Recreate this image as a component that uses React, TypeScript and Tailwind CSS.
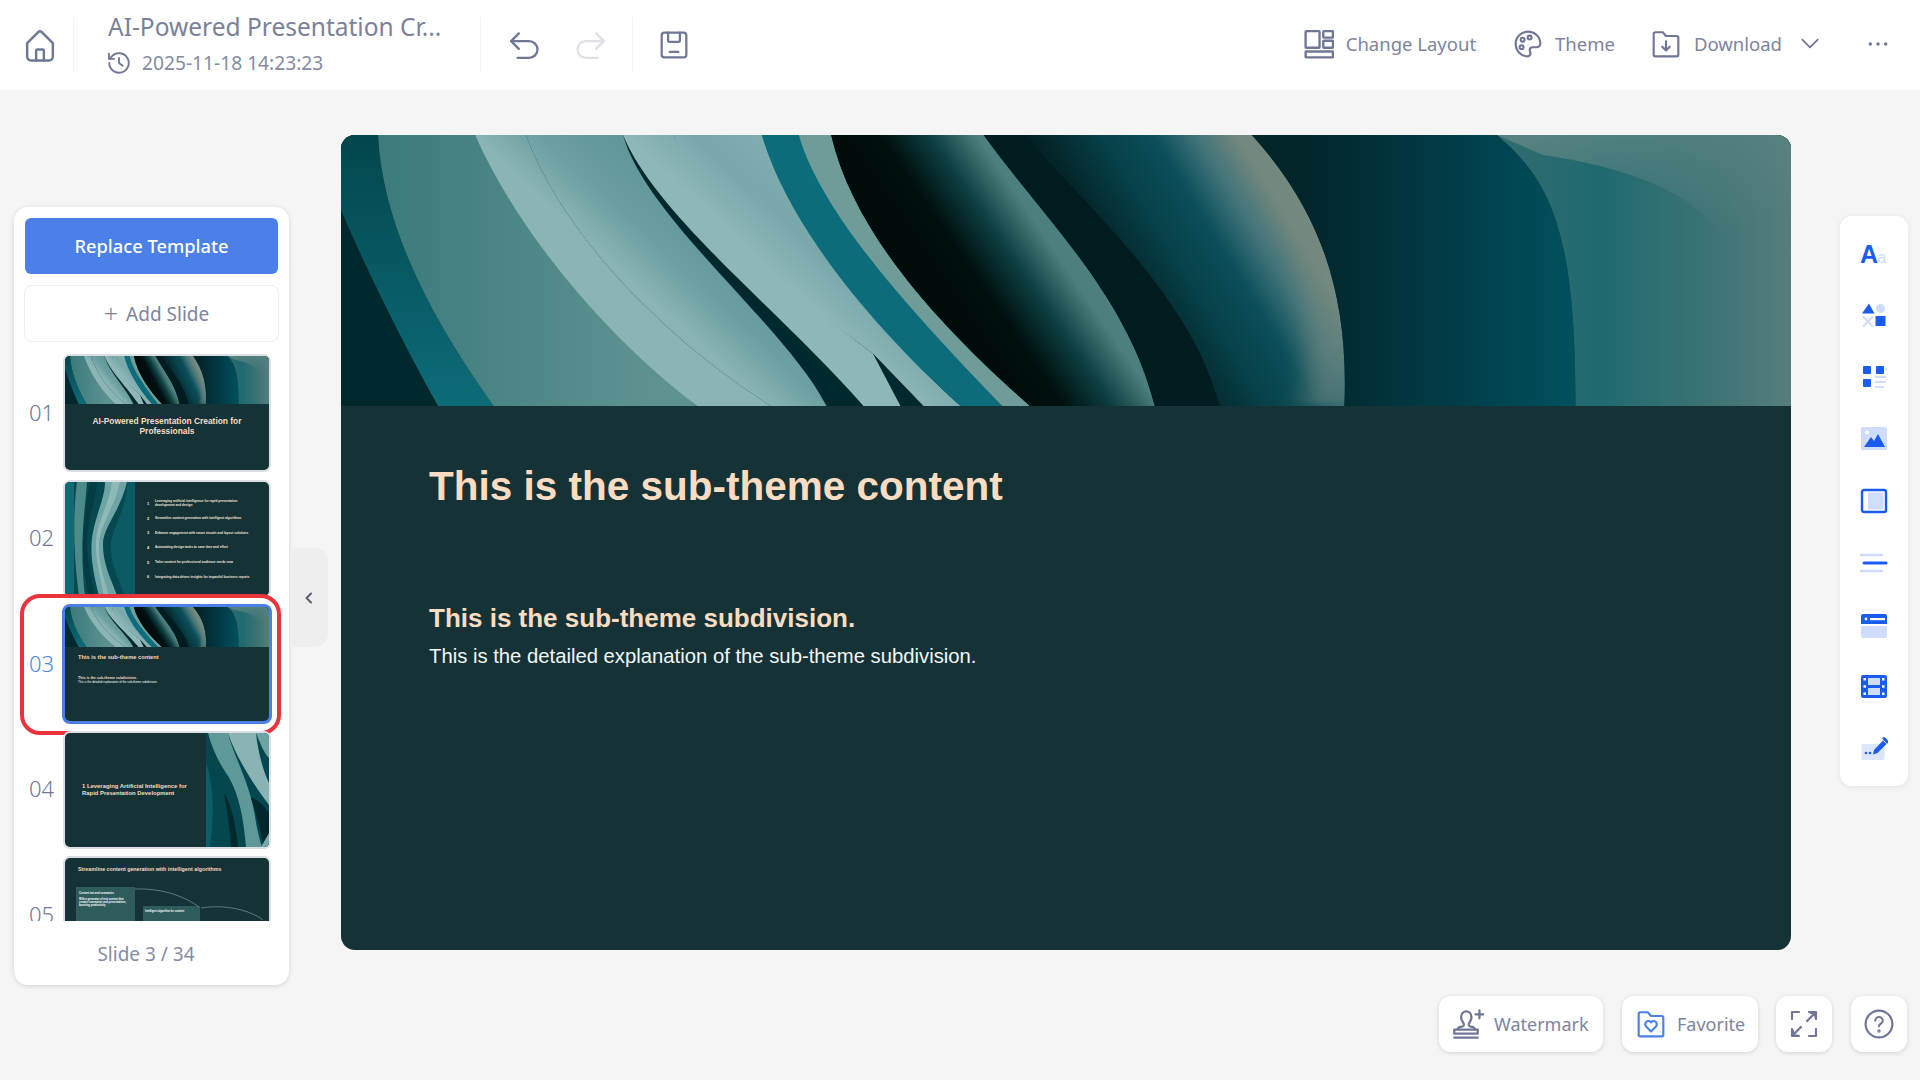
import React from "react";

function Art({ className = "" }: { className?: string }) {
  return (
    <svg viewBox="0 0 1568 813" preserveAspectRatio="none" className={className}>
      <defs>
        <linearGradient id="a-b2" x1="40" y1="0" x2="330" y2="0" gradientUnits="userSpaceOnUse">
          <stop offset="0" stopColor="#3c7a7c" />
          <stop offset="1" stopColor="#5d9291" />
        </linearGradient>
        <linearGradient id="a-s1" x1="0" y1="0" x2="0" y2="813" gradientUnits="userSpaceOnUse">
          <stop offset="0" stopColor="#03464d" />
          <stop offset="1" stopColor="#0c6c78" />
        </linearGradient>
        <linearGradient id="a-g3" x1="145" y1="0" x2="295" y2="-58" gradientUnits="userSpaceOnUse">
          <stop offset="0" stopColor="#8ab4b5" />
          <stop offset="0.4" stopColor="#6b9fa0" />
          <stop offset="1" stopColor="#5f9596" />
        </linearGradient>
        <linearGradient id="a-g5" x1="305" y1="0" x2="455" y2="-58" gradientUnits="userSpaceOnUse">
          <stop offset="0" stopColor="#8fb7b9" />
          <stop offset="0.45" stopColor="#78a8ab" />
          <stop offset="1" stopColor="#82aeb1" />
        </linearGradient>
        <linearGradient id="a-b9" x1="540" y1="0" x2="679" y2="-34" gradientUnits="userSpaceOnUse">
          <stop offset="0" stopColor="#000c0b" />
          <stop offset="0.3" stopColor="#00100f" />
          <stop offset="0.65" stopColor="#0d3f42" />
          <stop offset="1" stopColor="#4d7f7e" />
        </linearGradient>
        <linearGradient id="a-b11" x1="740" y1="0" x2="960" y2="-48" gradientUnits="userSpaceOnUse">
          <stop offset="0" stopColor="#021f22" />
          <stop offset="0.35" stopColor="#074048" />
          <stop offset="0.6" stopColor="#0b4f5a" />
          <stop offset="0.8" stopColor="#43747a" />
          <stop offset="1" stopColor="#74897f" />
        </linearGradient>
        <linearGradient id="a-b12" x1="1040" y1="0" x2="1330" y2="0" gradientUnits="userSpaceOnUse">
          <stop offset="0" stopColor="#02252a" />
          <stop offset="0.5" stopColor="#013a45" />
          <stop offset="1" stopColor="#01505e" />
        </linearGradient>
        <linearGradient id="a-r" x1="1250" y1="0" x2="1568" y2="0" gradientUnits="userSpaceOnUse">
          <stop offset="0" stopColor="#326c70" />
          <stop offset="0.35" stopColor="#1f6a70" />
          <stop offset="0.75" stopColor="#3f7475" />
          <stop offset="1" stopColor="#567d7e" />
        </linearGradient>
        <linearGradient id="a-r2" x1="1300" y1="0" x2="1500" y2="300" gradientUnits="userSpaceOnUse">
          <stop offset="0" stopColor="#5c8583" stopOpacity="0.9" />
          <stop offset="1" stopColor="#5c8583" stopOpacity="0" />
        </linearGradient>
        <filter id="a-bl" x="-20%" y="-5%" width="140%" height="110%">
          <feGaussianBlur stdDeviation="14" />
        </filter>
      </defs>
      <rect width="1568" height="813" fill="#01282d" />
      <path d="M0 0L40 0C45 280 100 560 165 813L105 813C70 640 30 420 0 225Z" fill="url(#a-s1)" />
      <path d="M40 0L145 0C200 300 290 600 385 813L165 813C100 560 45 280 40 0Z" fill="url(#a-b2)" />
      <path d="M145 0L200 0C240 300 350 610 465 813L385 813C280 590 190 280 145 0Z" fill="url(#a-g3)" />
      <path d="M200 0L305 0C330 250 480 570 525 813L465 813C350 610 240 300 200 0Z" fill="url(#a-g3)" />
      <path d="M305 0L360 0C400 260 500 500 575 655L605 813L565 813C480 540 340 240 305 0Z" fill="url(#a-g5)" />
      <path d="M360 0L460 0C490 240 560 540 670 813L630 813L575 655C490 480 390 260 360 0Z" fill="url(#a-g5)" />
      <path d="M455 0L495 0C525 240 620 500 715 813L670 813C560 540 480 240 455 0Z" fill="#0d6c7b" />
      <path d="M495 0L530 0C555 300 650 580 745 813L715 813C620 540 520 240 495 0Z" fill="#6f9b98" />
      <path d="M530 0L695 0C760 250 850 480 880 813L745 813C650 580 555 300 530 0Z" fill="url(#a-b9)" />
      <path d="M695 0L740 0C800 200 920 480 950 813L880 813C850 480 760 250 695 0Z" fill="#011c1e" />
      <path d="M740 0L985 0C1060 230 1090 480 1085 813L950 813C920 480 800 200 740 0Z" fill="url(#a-b11)" />
      <path d="M960 0L985 0C1060 230 1090 480 1085 813L1040 813C1060 500 1040 230 960 0Z" fill="#74897f" opacity="0.55" filter="url(#a-bl)" />
      <path d="M985 0L1250 0C1310 140 1335 300 1335 813L1085 813C1090 480 1060 230 985 0Z" fill="url(#a-b12)" />
      <path d="M1250 0L1568 0L1568 813L1335 813C1335 300 1310 140 1250 0Z" fill="url(#a-r)" />
      <path d="M1250 0L1568 0L1568 400L1500 400C1500 200 1400 100 1300 60Z" fill="url(#a-r2)" />
    </svg>
  );
}

function ArtTall() {
  return (
    <svg viewBox="0 0 70 114" preserveAspectRatio="none" className="w-[70px] h-full shrink-0">
      <rect width="70" height="114" fill="#05484f" />
      <rect width="9" height="114" fill="#0d6b75" />
      <path d="M12 0L22 0C20 30 14 60 20 114L14 114C8 70 8 30 12 0Z" fill="#4d8a8a" />
      <path d="M25 0L32 0C30 20 22 40 22 60C22 85 28 100 30 114L24 114C18 90 14 60 25 0Z" fill="#043c42" />
      <path d="M40 0L62 0C55 30 38 45 38 62C38 85 48 100 52 114L34 114C28 90 24 70 28 50C32 30 40 15 40 0Z" fill="#6fa4a4" />
      <path d="M47 0L55 0C50 25 35 42 34 62C33 80 40 100 44 114L39 114C34 90 30 75 31 58C33 38 45 20 47 0Z" fill="#8fb8b8" />
      <path d="M62 0L70 0L70 114L60 114C50 90 44 75 46 60C50 40 62 25 62 0Z" fill="#0a5963" />
    </svg>
  );
}

function ArtSweep() {
  return (
    <svg viewBox="0 0 63 114" preserveAspectRatio="none" className="w-[63px] h-full shrink-0">
      <rect width="63" height="114" fill="#04474e" />
      <path d="M0 30C8 50 8 85 4 114L0 114Z" fill="#0a5e68" />
      <path d="M2 0L22 0C28 25 45 50 50 90C52 100 54 108 56 114L40 114C38 90 34 60 20 40C12 28 6 15 2 0Z" fill="#5f9898" />
      <path d="M22 0L50 0C52 20 58 40 63 50L63 72C50 55 30 25 22 0Z" fill="#8ab3b3" />
      <path d="M50 0L63 0L63 25C58 20 54 10 50 0Z" fill="#6da3a3" />
      <path d="M18 60C22 80 24 100 25 114L32 114C30 95 27 75 18 60Z" fill="#01282d" />
      <path d="M45 65C50 80 55 100 58 114L63 114L63 80C58 72 50 65 45 65Z" fill="#01282d" />
      <path d="M55 114L63 100L63 114Z" fill="#7aa9a9" />
    </svg>
  );
}

function Thumb({ selected, children }: { selected?: boolean; children: React.ReactNode }) {
  return (
    <div
      className={
        selected
          ? "w-[204px] h-[114px] shrink-0 rounded-[5px] overflow-hidden bg-[#153236] shadow-[0_0_0_3px_#4a80e8] flex flex-col"
          : "w-[204px] h-[114px] shrink-0 rounded-[5px] overflow-hidden bg-[#153236] shadow-[0_0_0_2px_#dcdfe4] flex flex-col"
      }
    >
      {children}
    </div>
  );
}

function Row({ n, selected, children }: { n: string; selected?: boolean; children: React.ReactNode }) {
  return (
    <div className="relative flex items-center pl-[15px]">
      <span className={selected ? "w-[36px] pb-[3px] text-[22px] font-light text-[#4f88e8] leading-none" : "w-[36px] pb-[3px] text-[22px] font-light text-[#6f7795] leading-none"}>
        {n}
      </span>
      <Thumb selected={selected}>{children}</Thumb>
      {selected && <div className="absolute left-[6px] right-[8px] top-[-13px] bottom-[-14px] border-[4px] border-[#e9343c] rounded-[20px] pointer-events-none" />}
    </div>
  );
}

function T1() {
  return (
    <>
      <Art className="w-full h-[48px] shrink-0" />
      <div className="font-['Liberation_Sans',Arial,sans-serif] font-bold text-[#f8dcc4] text-[8.4px] leading-[10px] text-center px-[18px] pt-[12px]">
        AI-Powered Presentation Creation for Professionals
      </div>
    </>
  );
}

function T2() {
  const rows = [
    "Leveraging artificial intelligence for rapid presentation development and design",
    "Streamline content generation with intelligent algorithms",
    "Enhance engagement with smart visuals and layout solutions",
    "Automating design tasks to save time and effort",
    "Tailor content for professional audience needs now",
    "Integrating data-driven insights for impactful business reports",
  ];
  return (
    <div className="flex h-full">
      <ArtTall />
      <div className="flex flex-col pl-[12px] pt-[15px] font-['Liberation_Sans',Arial,sans-serif] text-[#f3e6da]">
        {rows.map((r, i) => (
          <div key={r} className="h-[14.7px] flex items-center font-bold">
            <span className="w-[8px] text-[4px] leading-[4px]">{i + 1}</span>
            <span className="w-[102px] text-[3.2px] leading-[3.4px]">{r}</span>
          </div>
        ))}
      </div>
    </div>
  );
}

function T3() {
  return (
    <>
      <Art className="w-full h-[40px] shrink-0" />
      <div className="font-['Liberation_Sans',Arial,sans-serif] pl-[13px] pt-[7px]">
        <div className="font-bold text-[#f8dcc4] text-[5.7px] leading-[7px]">This is the sub-theme content</div>
        <div className="font-bold text-[#f8dcc4] text-[3.6px] leading-[4px] mt-[15px]">This is the sub-theme subdivision.</div>
        <div className="text-white text-[2.95px] leading-[4px]">This is the detailed explanation of the sub-theme subdivision.</div>
      </div>
    </>
  );
}

function T4() {
  return (
    <div className="flex h-full items-center">
      <div className="flex-1 pl-[17px] font-['Liberation_Sans',Arial,sans-serif] font-bold text-[#f8dcc4] text-[5.9px] leading-[7px]">
        <div>1 Leveraging Artificial Intelligence for</div>
        <div>Rapid Presentation Development</div>
      </div>
      <ArtSweep />
    </div>
  );
}

function T5() {
  return (
    <div className="relative h-full font-['Liberation_Sans',Arial,sans-serif]">
      <div className="pl-[13px] pt-[8px] font-bold text-[#f8dcc4] text-[5.3px] leading-[7px] whitespace-nowrap">
        Streamline content generation with intelligent algorithms
      </div>
      <div className="flex items-start pl-[11px] mt-[14px]">
        <div className="w-[59px] h-[44px] bg-[#2d5c5a] text-white text-[2.6px] leading-[3px] px-[3px] pt-[5px] font-bold">
          <div>Content text and summaries</div>
          <div className="mt-[3px]">With a generator of text content that creates summaries and presentations, boosting productivity</div>
        </div>
        <div className="w-[57px] h-[30px] mt-[19px] ml-[8px] bg-[#2d5c5a] text-white text-[2.6px] leading-[3px] px-[2px] pt-[4px] font-bold">
          Intelligent algorithm for content
        </div>
      </div>
      <svg viewBox="0 0 204 114" className="absolute inset-0 w-full h-full">
        <path d="M70 31C100 30 122 40 134 49" fill="none" stroke="#7f9a98" strokeWidth="0.7" />
        <path d="M136 50C160 46 185 52 198 62" fill="none" stroke="#7f9a98" strokeWidth="0.7" />
      </svg>
    </div>
  );
}

const stroke = "#6f7795";

function Ico({ size = 28, children, color = stroke, sw = 2 }: { size?: number; children: React.ReactNode; color?: string; sw?: number }) {
  return (
    <svg width={size} height={size} viewBox="0 0 28 28" fill="none" stroke={color} strokeWidth={sw} strokeLinecap="round" strokeLinejoin="round" className="shrink-0">
      {children}
    </svg>
  );
}

const Blue = "#1a5cf0";
const Pale = "#cfdcfb";

function ToolIcon({ children }: { children: React.ReactNode }) {
  return (
    <svg width="28" height="28" viewBox="0 0 28 28" className="shrink-0">
      {children}
    </svg>
  );
}

const tools = [
  <ToolIcon key="a">
    <text x="0" y="24" fontSize="25" fontWeight="700" fontFamily="'Liberation Sans',Arial,sans-serif" fill={Blue}>A</text>
    <text x="17.5" y="23.5" fontSize="16" fontFamily="'Liberation Sans',Arial,sans-serif" fill={Pale}>a</text>
  </ToolIcon>,
  <ToolIcon key="b">
    <path d="M9 2.5L14.5 12.5H2Z" fill={Blue} />
    <circle cx="20.5" cy="7.5" r="4.5" fill={Pale} />
    <path d="M3 15.5L13 25.5M13 15.5L3 25.5" stroke={Pale} strokeWidth="2" />
    <rect x="15.5" y="15" width="10" height="10" fill={Blue} />
  </ToolIcon>,
  <ToolIcon key="c">
    <rect x="3" y="3" width="8" height="8" rx="1" fill={Blue} />
    <rect x="16" y="3" width="8" height="8" rx="1" fill={Blue} />
    <rect x="3" y="16" width="8" height="8" rx="1" fill={Blue} />
    <path d="M15 14H26M15 19H26M15 24H24M25 6H27" stroke={Pale} strokeWidth="2" />
  </ToolIcon>,
  <ToolIcon key="d">
    <rect x="1" y="2" width="26" height="23" rx="1.5" fill={Pale} />
    <circle cx="7" cy="7.5" r="2" fill="#fff" />
    <path d="M4 22L11 12L14 16L18 9L25 22Z" fill={Blue} />
  </ToolIcon>,
  <ToolIcon key="e">
    <rect x="2" y="3" width="24" height="22" rx="2" fill="#fff" stroke={Blue} strokeWidth="2.4" />
    <rect x="8" y="5.5" width="15.5" height="17" fill={Pale} />
  </ToolIcon>,
  <ToolIcon key="f">
    <path d="M1 6H22M1 22H22" stroke={Pale} strokeWidth="2.6" strokeLinecap="round" />
    <path d="M4 14H26" stroke={Blue} strokeWidth="3" strokeLinecap="round" />
  </ToolIcon>,
  <ToolIcon key="g">
    <path d="M1 15H27V25a2 2 0 0 1-2 2H3a2 2 0 0 1-2-2Z" fill={Pale} />
    <path d="M3 3H25a2 2 0 0 1 2 2V13H1V5a2 2 0 0 1 2-2Z" fill={Blue} />
    <circle cx="6" cy="8" r="1.4" fill="#fff" />
    <rect x="10" y="7" width="15" height="2.2" fill="#fff" />
  </ToolIcon>,
  <ToolIcon key="h">
    <rect x="1" y="2" width="26" height="23" rx="2" fill={Blue} />
    <rect x="8" y="5" width="12" height="7" fill={Pale} />
    <rect x="8" y="15" width="12" height="7" fill={Pale} />
    <g fill="#fff">
      <rect x="3.5" y="5" width="2.5" height="2.5" />
      <rect x="3.5" y="12.2" width="2.5" height="2.5" />
      <rect x="3.5" y="19.5" width="2.5" height="2.5" />
      <rect x="22" y="5" width="2.5" height="2.5" />
      <rect x="22" y="12.2" width="2.5" height="2.5" />
      <rect x="22" y="19.5" width="2.5" height="2.5" />
    </g>
  </ToolIcon>,
  <ToolIcon key="i">
    <rect x="1.5" y="9" width="23" height="16" rx="2" fill={Pale} opacity="0.75" />
    <path d="M14 15L23 5.5L26.5 9L17.5 18L13 19.5Z" fill={Blue} />
    <path d="M24 3.5L27.5 7" stroke={Blue} strokeWidth="3" strokeLinecap="round" />
    <circle cx="6" cy="18" r="1.3" fill={Blue} />
    <circle cx="10" cy="18" r="1.3" fill={Blue} />
  </ToolIcon>,
];

export default function App() {
  return (
    <div className="w-[1920px] h-[1080px] overflow-hidden bg-[#f5f5f5] flex flex-col font-['Noto_Sans',sans-serif] text-[#7d849c]">
      {/* Header */}
      <header className="h-[90px] shrink-0 bg-white flex items-center">
        <div className="w-[74px] h-[56px] flex items-center justify-center border-r border-[#f3f3f5] pl-[7px]">
          <Ico size={36} sw={1.9}>
            <path d="M4 12.5L12.6 4a2 2 0 0 1 2.8 0L24 12.5V23a3 3 0 0 1-3 3H7a3 3 0 0 1-3-3Z" />
            <path d="M11 26V18.5a1 1 0 0 1 1-1h4a1 1 0 0 1 1 1V26" />
          </Ico>
        </div>
        <div className="w-[407px] h-[56px] border-r border-[#f3f3f5] pl-[34px] pb-[2.4px] flex flex-col justify-center">
          <div className="text-[24.5px] leading-[30px] text-[#7a8199] whitespace-nowrap">AI-Powered Presentation Cr...</div>
          <div className="flex items-center mt-[7.4px] text-[19.2px] leading-[22px] text-[#858ba1]">
            <span className="-ml-[2px]">
              <Ico size={26}>
                <path d="M3.5 14a10.5 10.5 0 1 0 3-7.4L3.5 9.5" />
                <path d="M3.2 4v5.5h5.5" />
                <path d="M14 8.5V14l4 3" />
              </Ico>
            </span>
            <span className="ml-[10px]">2025-11-18 14:23:23</span>
          </div>
        </div>
        <div className="w-[152px] h-[56px] border-r border-[#f3f3f5] flex items-center pl-[25px] gap-[31px]">
          <Ico size={36} sw={1.8}>
            <path d="M10 5L4 11L10 17" />
            <path d="M4 11H18a6.5 6.5 0 0 1 0 13H9" />
          </Ico>
          <Ico size={36} sw={1.8} color="#dfe1e6">
            <path d="M18 5L24 11L18 17" />
            <path d="M24 11H10a6.5 6.5 0 0 0 0 13H19" />
          </Ico>
        </div>
        <div className="pl-[26px]">
          <Ico size={30} sw={2.1}>
            <rect x="2.5" y="2.5" width="23" height="23" rx="2.5" />
            <path d="M8.5 2.5V10a1 1 0 0 0 1 1h9a1 1 0 0 0 1-1V2.5" />
            <path d="M10 20.5H18" />
          </Ico>
        </div>
        <div className="ml-auto flex items-center pr-[30px] pb-[2px] text-[18.5px]">
          <Ico size={30} sw={2.2}>
            <rect x="1.5" y="2" width="13" height="15.5" rx="0.5" />
            <rect x="18" y="2" width="9" height="6" rx="0.5" />
            <rect x="18" y="11" width="9" height="6.5" rx="0.5" />
            <rect x="1.5" y="21" width="25.5" height="5.5" rx="0.5" />
          </Ico>
          <span className="ml-[12px] whitespace-nowrap">Change Layout</span>
          <span className="ml-[37px]">
            <Ico size={30}>
              <path d="M14 2.5C7.5 2.5 2.5 7.8 2.5 14S7.5 25.5 13.5 25.5c2 0 2.8-1.4 2.8-2.8 0-1-.7-1.8-.7-2.9 0-1.6 1.3-2.8 2.8-2.8h3.2c2.3 0 3.9-1.5 3.9-3.7C25.5 7 20 2.5 14 2.5Z" />
              <circle cx="9" cy="10" r="1.8" />
              <circle cx="15.5" cy="8" r="1.8" />
              <circle cx="8" cy="17" r="1.8" />
            </Ico>
          </span>
          <span className="ml-[12px]">Theme</span>
          <span className="ml-[36px]">
            <Ico size={30}>
              <path d="M2.5 4.5a1.5 1.5 0 0 1 1.5-1.5h7l3 3.5h10a1.5 1.5 0 0 1 1.5 1.5V24a1.5 1.5 0 0 1-1.5 1.5H4A1.5 1.5 0 0 1 2.5 24Z" />
              <path d="M14 11.5V20M10.5 16.5L14 20L17.5 16.5" />
            </Ico>
          </span>
          <span className="ml-[13px]">Download</span>
          <span className="ml-[16px]">
            <Ico size={24}>
              <path d="M5 9L14 18L23 9" />
            </Ico>
          </span>
          <span className="ml-[44px]">
            <Ico size={24} sw={0}>
              <circle cx="5" cy="14" r="2" fill={stroke} />
              <circle cx="14" cy="14" r="2" fill={stroke} />
              <circle cx="23" cy="14" r="2" fill={stroke} />
            </Ico>
          </span>
        </div>
      </header>

      {/* Body */}
      <div className="h-[895px] shrink-0 flex items-start pl-[14px]">
        <aside className="mt-[117px] w-[275px] h-[778px] bg-white rounded-[14px] shadow-[0_1px_5px_rgba(0,0,0,0.14)] flex flex-col">
          <div className="pt-[11px] pl-[11px] pr-[11px]">
            <button className="w-[253px] h-[56px] rounded-[6px] bg-[#4a80e8] text-white text-[18.3px] font-medium leading-none">Replace Template</button>
            <button className="mt-[11px] -ml-[1px] w-[255px] h-[57px] rounded-[8px] border border-[#eceef1] bg-white text-[19px] text-[#7d849c] pl-[10px] pt-[2px]">
              <span className="text-[25px] leading-none mr-[8px] font-light align-[-2px]">+</span>Add Slide
            </button>
          </div>
          <div className="mt-[11px] h-[568px] overflow-hidden flex flex-col gap-[11.5px] pt-[3px]">
            <Row n="01"><T1 /></Row>
            <Row n="02"><T2 /></Row>
            <Row n="03" selected><T3 /></Row>
            <Row n="04"><T4 /></Row>
            <Row n="05"><T5 /></Row>
          </div>
          <div className="text-[19px] leading-[24px] mt-[21px] text-center pr-[11px] text-[#868ca2]">Slide 3 / 34</div>
        </aside>

        <div className="mt-[458px] w-[38px] h-[99px] ml-[1px] rounded-r-[14px] bg-[#eeeeee] flex items-center justify-center">
          <svg width="14" height="14" viewBox="0 0 14 14" fill="none" stroke="#565d73" strokeWidth="2" strokeLinecap="round" strokeLinejoin="round">
            <path d="M9 2.5L4.5 7L9 11.5" />
          </svg>
        </div>

        <main className="mt-[45px] ml-[13px] w-[1450px] h-[815px] rounded-[14px] overflow-hidden bg-[#153236] flex flex-col font-['Liberation_Sans',Arial,sans-serif]">
          <Art className="w-full h-[271px] shrink-0" />
          <div className="pl-[88px] pt-[57px]">
            <h1 className="text-[40.5px] leading-[46px] font-bold text-[#fbdcc0]">This is the sub-theme content</h1>
            <h2 className="mt-[94px] text-[26px] leading-[30px] font-bold text-[#fbdcc0]">This is the sub-theme subdivision.</h2>
            <p className="mt-[11px] text-[20.27px] leading-[24px] text-[#f1f7f7]">This is the detailed explanation of the sub-theme subdivision.</p>
          </div>
        </main>

        <div className="mt-[126px] ml-[49px] w-[68px] h-[570px] rounded-[12px] bg-white shadow-[0_1px_6px_rgba(0,0,0,0.08)] flex flex-col items-center pt-[23px] gap-[34px]">
          {tools}
        </div>
      </div>

      {/* Bottom */}
      <div className="flex justify-end pt-[11px] pr-[13px] text-[18px]">
        <div className="h-[56px] w-[164px] rounded-[12px] bg-white shadow-[0_1px_4px_rgba(0,0,0,0.14)] flex items-center pl-[13px]">
          <Ico size={32}>
            <path d="M5 18.5c0-2 3-2 4.5-2.5 1.5-.7.8-2.8-.3-4.2-1-1.3-1.2-2.6-1.2-3.8C8 5 10 3 12.5 3S17 5 17 8c0 1.2-.3 2.5-1.2 3.8-1 1.4-1.7 3.5-.3 4.2 1.5.5 4.5.5 4.5 2.5" />
            <path d="M2 19H22.5V22.5H2ZM2 26H22.5" />
            <path d="M24 2V9M20.5 5.5H27.5" />
          </Ico>
          <span className="ml-[10px]">Watermark</span>
        </div>
        <div className="h-[56px] w-[136px] ml-[19px] rounded-[12px] bg-white shadow-[0_1px_4px_rgba(0,0,0,0.14)] flex items-center pl-[14px]">
          <Ico size={30} color="#4a80e8">
            <path d="M2.5 4.5a1.5 1.5 0 0 1 1.5-1.5h7l3 3.5h10a1.5 1.5 0 0 1 1.5 1.5V24a1.5 1.5 0 0 1-1.5 1.5H4A1.5 1.5 0 0 1 2.5 24Z" />
            <path d="M14 21l-4.6-4.6a3 3 0 0 1 4.3-4.2l.3.3.3-.3a3 3 0 0 1 4.3 4.2Z" />
          </Ico>
          <span className="ml-[11px]">Favorite</span>
        </div>
        <div className="h-[56px] w-[56px] ml-[18px] rounded-[12px] bg-white shadow-[0_1px_4px_rgba(0,0,0,0.14)] flex items-center justify-center">
          <Ico size={28} sw={2.2}>
            <path d="M2 9V2H9M19 26H26V19M2 19V26H9M19 2H26V9" />
            <path d="M25 3L17 11M21 3H25.5V7.5M3 25L11 17M3 20.5V25.5H7.5" />
          </Ico>
        </div>
        <div className="h-[56px] w-[56px] ml-[19px] rounded-[12px] bg-white shadow-[0_1px_4px_rgba(0,0,0,0.14)] flex items-center justify-center">
          <Ico size={30}>
            <circle cx="14" cy="14" r="12.5" />
            <path d="M10.5 11a3.5 3.5 0 0 1 7 0c0 2.5-3.5 2.8-3.5 5.2" />
            <circle cx="14" cy="20.5" r="0.6" />
          </Ico>
        </div>
      </div>
    </div>
  );
}
